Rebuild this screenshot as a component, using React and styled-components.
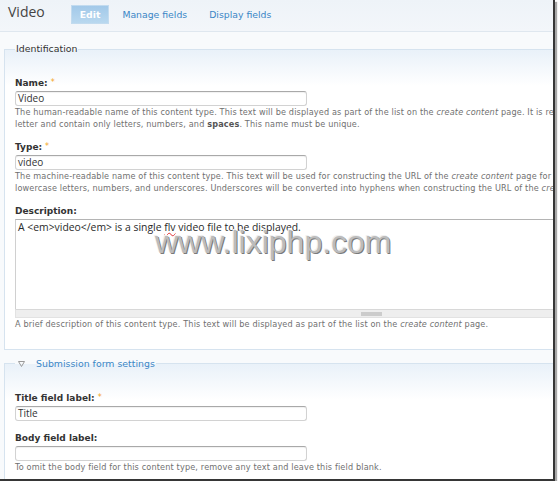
import React from 'react'
import styled, { createGlobalStyle } from 'styled-components'

const GlobalStyle = createGlobalStyle`
    html, body {
        margin: 0;
        padding: 0;
        background: #fff;
    }
    body {
        font-family: "DejaVu Sans", Verdana, sans-serif;
        color: #333;
    }
`

const Window = styled.div`
    position: relative;
    width: 553px;
    height: 479px;
    overflow: hidden;
    border-right: 2px solid #363636;
    border-bottom: 2px solid #363636;
    box-shadow: 2px 2px 1px #a8a8a8;
    background: #f8fafc;
`

const Page = styled.div`
    width: 740px;
`

const Header = styled.div`
    display: flex;
    align-items: flex-start;
    height: 32px;
    box-sizing: border-box;
    padding: 6px 0 0 8px;
    background: linear-gradient(#eef3f8, #f3f6fa);
    border-bottom: 1px solid #dfe7ef;
`

const PageTitle = styled.h1`
    margin: -3px 27px 0 0;
    font-family: "Open Sans", sans-serif;
    font-weight: 400;
    font-size: 14px;
    line-height: 17px;
    color: #444;
`

const Tabs = styled.ul`
    display: flex;
    gap: 6px;
    margin: 0;
    padding: 0;
    list-style: none;
`

const Tab = styled.li`
    height: 17px;
    box-sizing: border-box;
    padding: 0 8px;
    font-size: 9.3px;
    line-height: 17px;
    font-weight: ${p => p.$active ? 700 : 400};
    color: ${p => p.$active ? '#fff' : '#3a86c6'};
    background: ${p => p.$active ? 'linear-gradient(#a2c9e9, #b9d8ef)' : 'transparent'};
    box-shadow: ${p => p.$active ? '0 0 0 1px #c2dbef' : 'none'};
`

const Content = styled.div`
    padding: 11px 0 0 4px;
`

const Fieldset = styled.fieldset`
    margin: 0 0 8px 0;
    padding: 22px 10px 18px 10px;
    border: 1px solid #d6e3ef;
    background: linear-gradient(#e9f1f9, #fff 36px);
    min-width: 0;
`

const Legend = styled.legend`
    display: flex;
    align-items: center;
    padding: 0 1px;
    font-size: 9.4px;
    line-height: 12px;
    color: ${p => p.$link ? '#3a86c6' : '#333'};
`

const Toggle = styled.svg`
    width: 7px;
    height: 6px;
    margin: 0 11px 0 2px;
`

const FormItem = styled.div`
    margin-bottom: 11px;
    &:last-child {
        margin-bottom: 0;
    }
`

const Label = styled.label`
    display: block;
    margin-bottom: 2px;
    font-size: 9px;
    line-height: 12px;
    font-weight: 700;
    color: #333;
`

const Required = styled.span`
    margin-left: 3px;
    color: #f5a623;
    font-weight: 400;
    font-size: 8px;
    vertical-align: 1px;
`

const TextInput = styled.div`
    width: 292px;
    height: 15px;
    box-sizing: border-box;
    padding: 0 2px;
    border: 1px solid #d2d2d2;
    border-top-color: #a9a9a9;
    border-radius: 3px;
    box-shadow: inset 0 1px 1px rgba(0, 0, 0, 0.06);
    background: #fff;
    font-family: "Open Sans", sans-serif;
    font-size: 10px;
    line-height: 13px;
    color: #333;
`

const TextArea = styled.div`
    width: 712px;
    height: 90px;
    box-sizing: border-box;
    padding: 1px 2px;
    border: 1px solid #d0d0d0;
    border-top-color: #b4b4b4;
    border-bottom: none;
    background: #fff;
    font-family: "Open Sans", sans-serif;
    font-size: 10.4px;
    line-height: 12px;
    color: #2a2a2a;
`

const Misspelled = styled.span`
    text-decoration: underline wavy #e03030;
    text-decoration-thickness: 1px;
    text-underline-offset: 1px;
`

const Grippie = styled.div`
    display: flex;
    align-items: center;
    justify-content: center;
    width: 712px;
    height: 9px;
    box-sizing: border-box;
    border: 1px solid #e2e2e2;
    border-top-color: #d8d8d8;
    background: #eeeeee;
    &::after {
        content: "";
        width: 21px;
        height: 4px;
        background: #cccccc;
    }
`

const Help = styled.div`
    margin-top: 1px;
    font-size: 8.15px;
    line-height: 11.5px;
    letter-spacing: 0.15px;
    color: #707070;
    white-space: nowrap;
    strong {
        color: #555;
    }
`

const Watermark = styled.div`
    position: absolute;
    left: 155px;
    top: 226px;
    font-family: "Liberation Sans", Arial, sans-serif;
    font-size: 32px;
    line-height: 32px;
    color: #bcbcbc;
    text-shadow: 1px 1px 0 #7a7a7a, -1px -1px 0 #f0f0f0;
    pointer-events: none;
`

const CreateContent = () => <em>create content</em>

const App = () => {
    return (
        <Window>
            <GlobalStyle />
            <Page>
                <Header>
                    <PageTitle>Video</PageTitle>
                    <Tabs>
                        <Tab $active>Edit</Tab>
                        <Tab>Manage fields</Tab>
                        <Tab>Display fields</Tab>
                    </Tabs>
                </Header>
                <Content>
                    <Fieldset>
                        <Legend>Identification</Legend>
                        <FormItem>
                            <Label>Name:<Required>*</Required></Label>
                            <TextInput>Video</TextInput>
                            <Help>
                                The human-readable name of this content type. This text will be displayed as part of the list on the <CreateContent /> page. It is recommended that this name begin with a capital<br />
                                letter and contain only letters, numbers, and <strong>spaces</strong>. This name must be unique.
                            </Help>
                        </FormItem>
                        <FormItem>
                            <Label>Type:<Required>*</Required></Label>
                            <TextInput>video</TextInput>
                            <Help>
                                The machine-readable name of this content type. This text will be used for constructing the URL of the <CreateContent /> page for this content type. This name must contain only<br />
                                lowercase letters, numbers, and underscores. Underscores will be converted into hyphens when constructing the URL of the <CreateContent /> page.
                            </Help>
                        </FormItem>
                        <FormItem>
                            <Label>Description:</Label>
                            <TextArea>
                                A &lt;em&gt;video&lt;/em&gt; is a single <Misspelled>flv</Misspelled> video file to be displayed.
                            </TextArea>
                            <Grippie />
                            <Help>
                                A brief description of this content type. This text will be displayed as part of the list on the <CreateContent /> page.
                            </Help>
                        </FormItem>
                    </Fieldset>
                    <Fieldset>
                        <Legend $link>
                            <Toggle viewBox="0 0 7 6">
                                <path d="M0.5 0.5 H6.5 L3.5 5.5 Z" fill="none" stroke="#9a9a9a" strokeWidth="1" />
                            </Toggle>
                            Submission form settings
                        </Legend>
                        <FormItem>
                            <Label>Title field label:<Required>*</Required></Label>
                            <TextInput>Title</TextInput>
                        </FormItem>
                        <FormItem>
                            <Label>Body field label:</Label>
                            <TextInput />
                            <Help>
                                To omit the body field for this content type, remove any text and leave this field blank.
                            </Help>
                        </FormItem>
                    </Fieldset>
                </Content>
            </Page>
            <Watermark>www.lixiphp.com</Watermark>
        </Window>
    )
}

export default App
